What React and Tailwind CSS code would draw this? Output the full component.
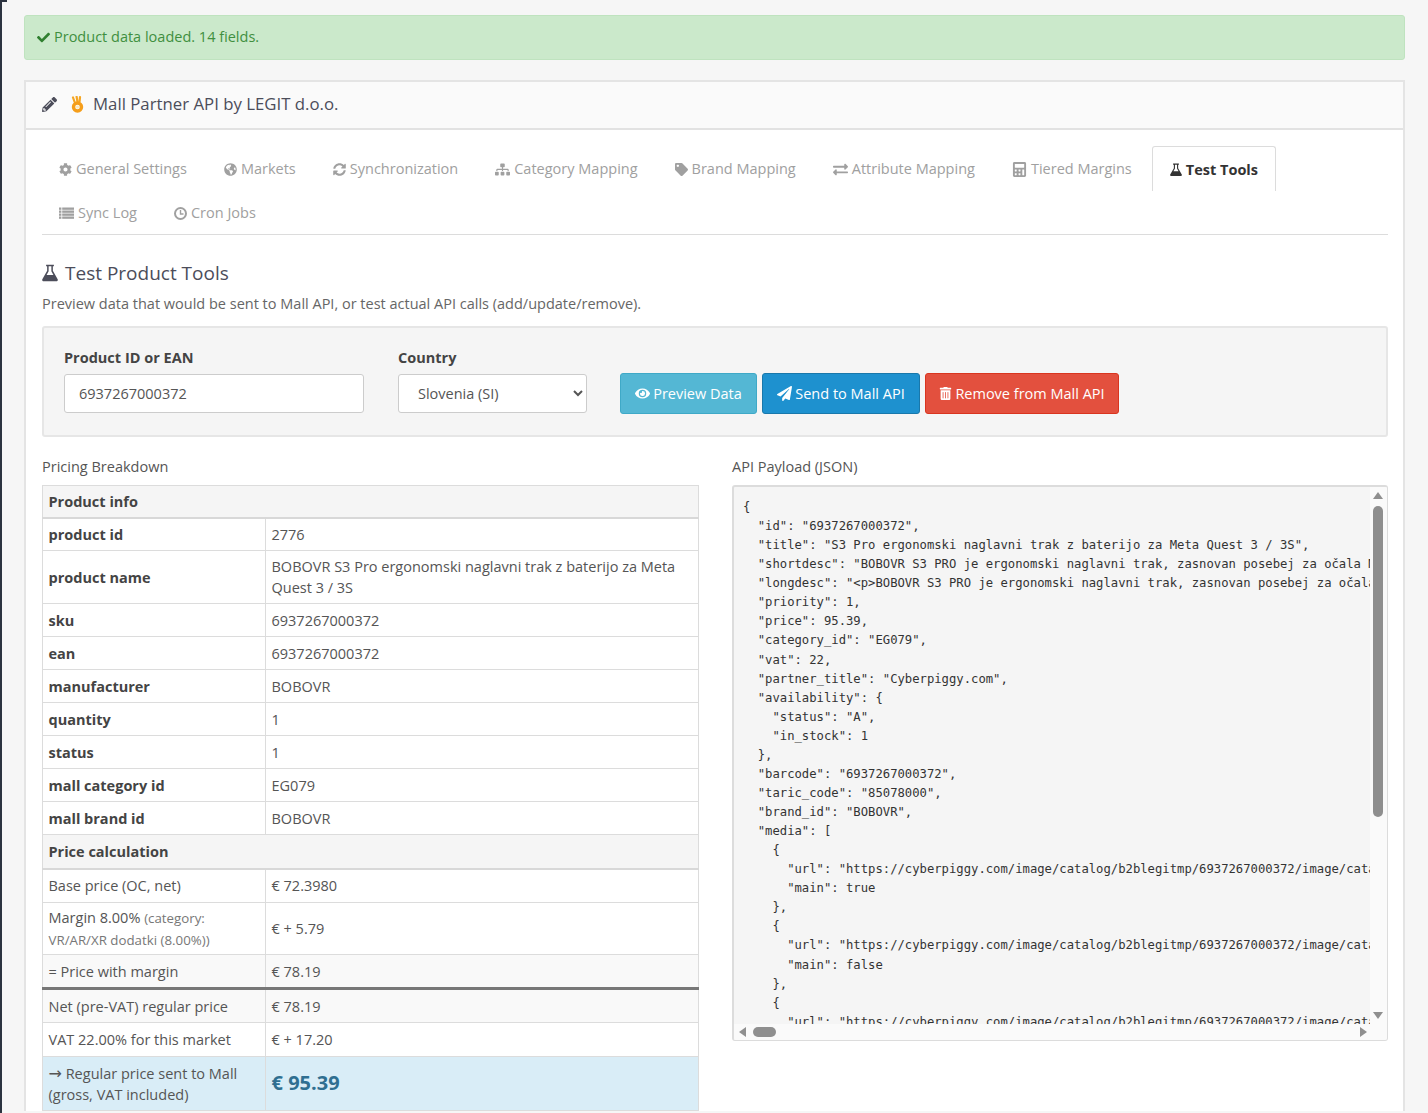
import React from "react";
import { FaCheck, FaPencilAlt, FaCog, FaGlobeAmericas, FaSyncAlt, FaSitemap, FaTag, FaExchangeAlt, FaCalculator, FaEye, FaPaperPlane, FaTrashAlt } from "react-icons/fa";

function FlaskIcon({ size = 14 }) {
  return (
    <svg width={size} height={size * 1.1} viewBox="0 0 14 15.4" className="shrink-0">
      <path d="M3.6 0.6 H10.4 V2 H9.5 V6 L13.6 13.2 C14.2 14.3 13.6 15.2 12.4 15.2 H1.6 C0.4 15.2 -0.2 14.3 0.4 13.2 L4.5 6 V2 H3.6 Z M5.8 2 V6.4 L4 9.6 H10 L8.2 6.4 V2 Z" fill="currentColor" fillRule="evenodd" />
    </svg>
  );
}

function ListIcon() {
  return (
    <svg width="15" height="13" viewBox="0 0 15 13" className="shrink-0">
      {[0.5, 3.5, 6.5, 9.5].map((y) => (
        <g key={y} fill="currentColor">
          <rect x="0" y={y} width="2.4" height="2.3" />
          <rect x="3.2" y={y} width="11.8" height="2.3" />
        </g>
      ))}
    </svg>
  );
}

function ClockIcon() {
  return (
    <svg width="13" height="13" viewBox="0 0 13 13" className="shrink-0">
      <circle cx="6.5" cy="6.5" r="5.5" fill="none" stroke="currentColor" strokeWidth="2" />
      <path d="M6.5 3 V7 H9.5" fill="none" stroke="currentColor" strokeWidth="1.4" />
    </svg>
  );
}

const tabs = [
  [<FaCog className="text-[13px]" />, "General Settings"],
  [<FaGlobeAmericas className="text-[13px]" />, "Markets"],
  [<FaSyncAlt className="text-[13px]" />, "Synchronization"],
  [<FaSitemap className="text-[15px]" />, "Category Mapping"],
  [<FaTag className="text-[13px]" />, "Brand Mapping"],
  [<FaExchangeAlt className="text-[15px]" />, "Attribute Mapping"],
  [<FaCalculator className="text-[15px]" />, "Tiered Margins"],
  [<FlaskIcon size={12} />, "Test Tools", true],
  [<ListIcon />, "Sync Log"],
  [<ClockIcon />, "Cron Jobs"],
];

const infoRows = [
  ["product id", "2776", "h-[33px]"],
  ["product name", "BOBOVR S3 Pro ergonomski naglavni trak z baterijo za Meta Quest 3 / 3S", "h-[53px]"],
  ["sku", "6937267000372", "h-[33px]"],
  ["ean", "6937267000372", "h-[33px]"],
  ["manufacturer", "BOBOVR", "h-[33px]"],
  ["quantity", "1", "h-[33px]"],
  ["status", "1", "h-[33px]"],
  ["mall category id", "EG079", "h-[33px]"],
  ["mall brand id", "BOBOVR", "h-[33px]"],
];

const jsonLines = [
  "{",
  '  "id": "6937267000372",',
  '  "title": "S3 Pro ergonomski naglavni trak z baterijo za Meta Quest 3 / 3S",',
  '  "shortdesc": "BOBOVR S3 PRO je ergonomski naglavni trak, zasnovan posebej za očala Meta Quest 3",',
  '  "longdesc": "<p>BOBOVR S3 PRO je ergonomski naglavni trak, zasnovan posebej za očala Meta Quest 3",',
  '  "priority": 1,',
  '  "price": 95.39,',
  '  "category_id": "EG079",',
  '  "vat": 22,',
  '  "partner_title": "Cyberpiggy.com",',
  '  "availability": {',
  '    "status": "A",',
  '    "in_stock": 1',
  "  },",
  '  "barcode": "6937267000372",',
  '  "taric_code": "85078000",',
  '  "brand_id": "BOBOVR",',
  '  "media": [',
  "    {",
  '      "url": "https://cyberpiggy.com/image/catalog/b2blegitmp/6937267000372/image/catalog/product.jpg",',
  '      "main": true',
  "    },",
  "    {",
  '      "url": "https://cyberpiggy.com/image/catalog/b2blegitmp/6937267000372/image/catalog/product.jpg",',
  '      "main": false',
  "    },",
  "    {",
  '      "url": "https://cyberpiggy.com/image/catalog/b2blegitmp/6937267000372/image/catalog/product.jpg",',
];

function OkHand() {
  return (
    <svg width="13" height="17" viewBox="0 0 13 17" className="shrink-0">
      <path d="M2 1.5 L3.6 6 M5.6 0.8 L6.4 5.5 M9 1.2 L8.6 5.5" stroke="#f5a623" strokeWidth="2.2" strokeLinecap="round" fill="none" />
      <circle cx="6.5" cy="11" r="4" fill="none" stroke="#f59e1b" strokeWidth="3.4" />
      <circle cx="6.5" cy="11" r="1.5" fill="#fde9b8" />
    </svg>
  );
}

function Row({ label, value, h = "h-[33px]", bold, bg = "" }) {
  return (
    <tr className={`${h} ${bg}`}>
      <td className={`border border-[#dcdcdc] px-[5.5px] py-0 align-middle ${bold ? "font-bold text-[#444]" : ""}`}>{label}</td>
      <td className="border border-[#dcdcdc] px-[5.5px] py-0 align-middle">{value}</td>
    </tr>
  );
}

function SectionRow({ children, h }) {
  return (
    <tr className={h}>
      <td colSpan={2} className="border border-[#dcdcdc] border-b-2 border-b-[#d8d8d8] bg-[#f5f5f5] px-[5.5px] py-0 align-middle font-bold text-[#444]">{children}</td>
    </tr>
  );
}

export default function App() {
  return (
    <div className="relative h-[1113px] overflow-hidden bg-[#f6f6f6] pl-6 pt-[15px] pr-[23px] text-[14.5px] text-[#555] font-['Open_Sans',sans-serif]">
      <div className="absolute left-0 top-0 h-full w-[2px] bg-[#2c3340]" />
      <div className="absolute left-0 top-0 h-[2px] w-[7px] bg-[#2c3340]" />

      <div className="flex h-[45px] items-center gap-[4px] rounded-[3px] border border-[#bfe3bf] bg-[#cbe9cb] pb-[1px] pl-[12px] text-[#3f8f3f]">
        <FaCheck className="text-[13px] text-[#2f7f2f]" />
        <span>Product data loaded. 14 fields.</span>
      </div>

      <div className="mt-[20px] border-x-2 border-t-2 border-[#e4e4e4] bg-white">
        <div className="flex h-[48px] items-center border-b-2 border-[#e2e2e2] bg-[#fafafa] pb-[2px] pl-[16px] text-[16.8px] text-[#4c4d5a]">
          <FaPencilAlt className="text-[15px] text-[#4c4d5a]" />
          <span className="ml-[14px] mr-[9px]"><OkHand /></span>
          <span>Mall Partner API by LEGIT d.o.o.</span>
        </div>

        <div className="pl-[16px] pr-[15px] pt-[16px]">
          <div className="flex flex-wrap border-b border-[#dcdcdc]">
            {tabs.map(([icon, name, active]) => (
              <div key={name} className={`mr-[3px] flex items-center gap-[4px] px-[17px] pt-[2px] ${active ? "-mb-px h-[45px] rounded-t-[3px] border border-b-0 border-[#dcdcdc] bg-white font-bold text-[#333]" : "h-[44px] text-[#a0a0a0]"}`}>
                {icon}
                <span>{name}</span>
              </div>
            ))}
          </div>

          <div className="mt-[25px] flex items-center gap-[7px] text-[19px] leading-[26px] text-[#4c4d5a]">
            <FlaskIcon size={16} />
            <span>Test Product Tools</span>
          </div>
          <p className="mt-[8px] leading-[20px] text-[#666]">Preview data that would be sent to Mall API, or test actual API calls (add/update/remove).</p>

          <div className="mt-[12px] flex h-[111px] items-start rounded-[3px] border-2 border-[#e6e6e6] bg-[#f5f5f5] pl-[20px] pt-[20px]">
            <div className="w-[300px]">
              <div className="font-bold leading-[20px] text-[#444]">Product ID or EAN</div>
              <input readOnly value="6937267000372" className="mt-[6px] h-[39px] w-full rounded-[3px] border border-[#ccc] bg-white px-[14px] text-[14.5px] text-[#555] outline-none" />
            </div>
            <div className="ml-[34px] w-[189px]">
              <div className="font-bold leading-[20px] text-[#444]">Country</div>
              <select defaultValue="SI" className="mt-[6px] h-[39px] w-full rounded-[3px] border border-[#ccc] bg-white px-[15px] text-[14.5px] text-[#555] outline-none">
                <option value="SI">Slovenia (SI)</option>
              </select>
            </div>
            <div className="ml-[33px] mt-[25px] flex gap-[5px] text-white">
              <div className="flex h-[41px] w-[137px] items-center justify-center gap-[3px] rounded-[3px] border border-[#3fa9c7] bg-[#54b7d4]"><FaEye className="text-[15px]" />Preview Data</div>
              <div className="flex h-[41px] w-[158px] items-center justify-center gap-[3px] rounded-[3px] border border-[#1978ab] bg-[#1e91cf]"><FaPaperPlane className="text-[15px]" />Send to Mall API</div>
              <div className="flex h-[41px] w-[194px] items-center justify-center gap-[3px] rounded-[3px] border border-[#d9351f] bg-[#e3503e]"><FaTrashAlt className="text-[13px]" />Remove from Mall API</div>
            </div>
          </div>

          <div className="mt-[20px] flex gap-[33px]">
            <div className="w-[657px]">
              <div className="mb-[8px] leading-[20px]">Pricing Breakdown</div>
              <table className="w-full table-fixed border-collapse bg-white leading-[21px]">
                <colgroup><col className="w-[223px]" /><col /></colgroup>
                <tbody>
                  <SectionRow h="h-[32px]">Product info</SectionRow>
                  {infoRows.map(([l, v, h]) => <Row key={l} label={l} value={v} h={h} bold />)}
                  <SectionRow h="h-[34px]">Price calculation</SectionRow>
                  <Row h="h-[34px]" label="Base price (OC, net)" value="€ 72.3980" />
                  <Row
                    h="h-[52px]"
                    label={<span>Margin 8.00% <span className="text-[13.3px] text-[#777]">(category:<br />VR/AR/XR dodatki (8.00%))</span></span>}
                    value="€ + 5.79"
                  />
                  <tr className="h-[34px] bg-[#f9f9f9]">
                    <td className="border border-[#dcdcdc] border-b-[3px] border-b-[#777] px-[5.5px] py-0 align-middle">= Price with margin</td>
                    <td className="border border-[#dcdcdc] border-b-[3px] border-b-[#777] px-[5.5px] py-0 align-middle">€ 78.19</td>
                  </tr>
                  <Row h="h-[34px]" label="Net (pre-VAT) regular price" value="€ 78.19" bg="bg-[#f9f9f9]" />
                  <Row h="h-[34px]" label="VAT 22.00% for this market" value="€ + 17.20" />
                  <Row
                    h="h-[54px]"
                    bg="bg-[#d9edf7]"
                    label={<span><span className="text-[16px] font-['DejaVu_Sans',sans-serif]">→</span> Regular price sent to Mall (gross, VAT included)</span>}
                    value={<strong className="text-[20px] text-[#2f6f91]">€ 95.39</strong>}
                  />
                </tbody>
              </table>
            </div>

            <div className="w-[656px]">
              <div className="mb-[8px] leading-[20px]">API Payload (JSON)</div>
              <div className="flex h-[556px] flex-col overflow-hidden rounded-[3px] border-2 border-[#dcdcdc] border-b border-r bg-[#f5f5f5]">
                <div className="flex min-h-0 flex-1">
                  <pre className="min-w-0 flex-1 overflow-hidden whitespace-pre pl-[9px] pt-[11px] text-[12.23px] leading-[19.07px] text-[#333] font-['DejaVu_Sans_Mono',monospace]">
                    {jsonLines.join("\n")}
                  </pre>
                  <div className="flex w-[17px] shrink-0 flex-col items-center bg-[#fafafa] pr-[1px] pt-[5px]">
                    <svg width="10" height="7" viewBox="0 0 10 7"><path d="M5 0 L10 7 H0 Z" fill="#8f8f8f" /></svg>
                    <div className="mt-[7px] h-[311px] w-[10px] rounded-[5px] bg-[#8f8f8f]" />
                    <div className="flex-1" />
                    <svg width="10" height="7" viewBox="0 0 10 7" className="mb-[5px]"><path d="M5 7 L10 0 H0 Z" fill="#8f8f8f" /></svg>
                  </div>
                </div>
                <div className="flex h-[16px] shrink-0 items-center bg-[#fafafa] pl-[5px] pr-[20px]">
                  <svg width="7" height="10" viewBox="0 0 7 10"><path d="M0 5 L7 0 V10 Z" fill="#8f8f8f" /></svg>
                  <div className="ml-[7px] h-[10px] w-[23px] rounded-[5px] bg-[#8f8f8f]" />
                  <div className="flex-1" />
                  <svg width="7" height="10" viewBox="0 0 7 10"><path d="M7 5 L0 0 V10 Z" fill="#8f8f8f" /></svg>
                </div>
              </div>
            </div>
          </div>
        </div>
      </div>
    </div>
  );
}
